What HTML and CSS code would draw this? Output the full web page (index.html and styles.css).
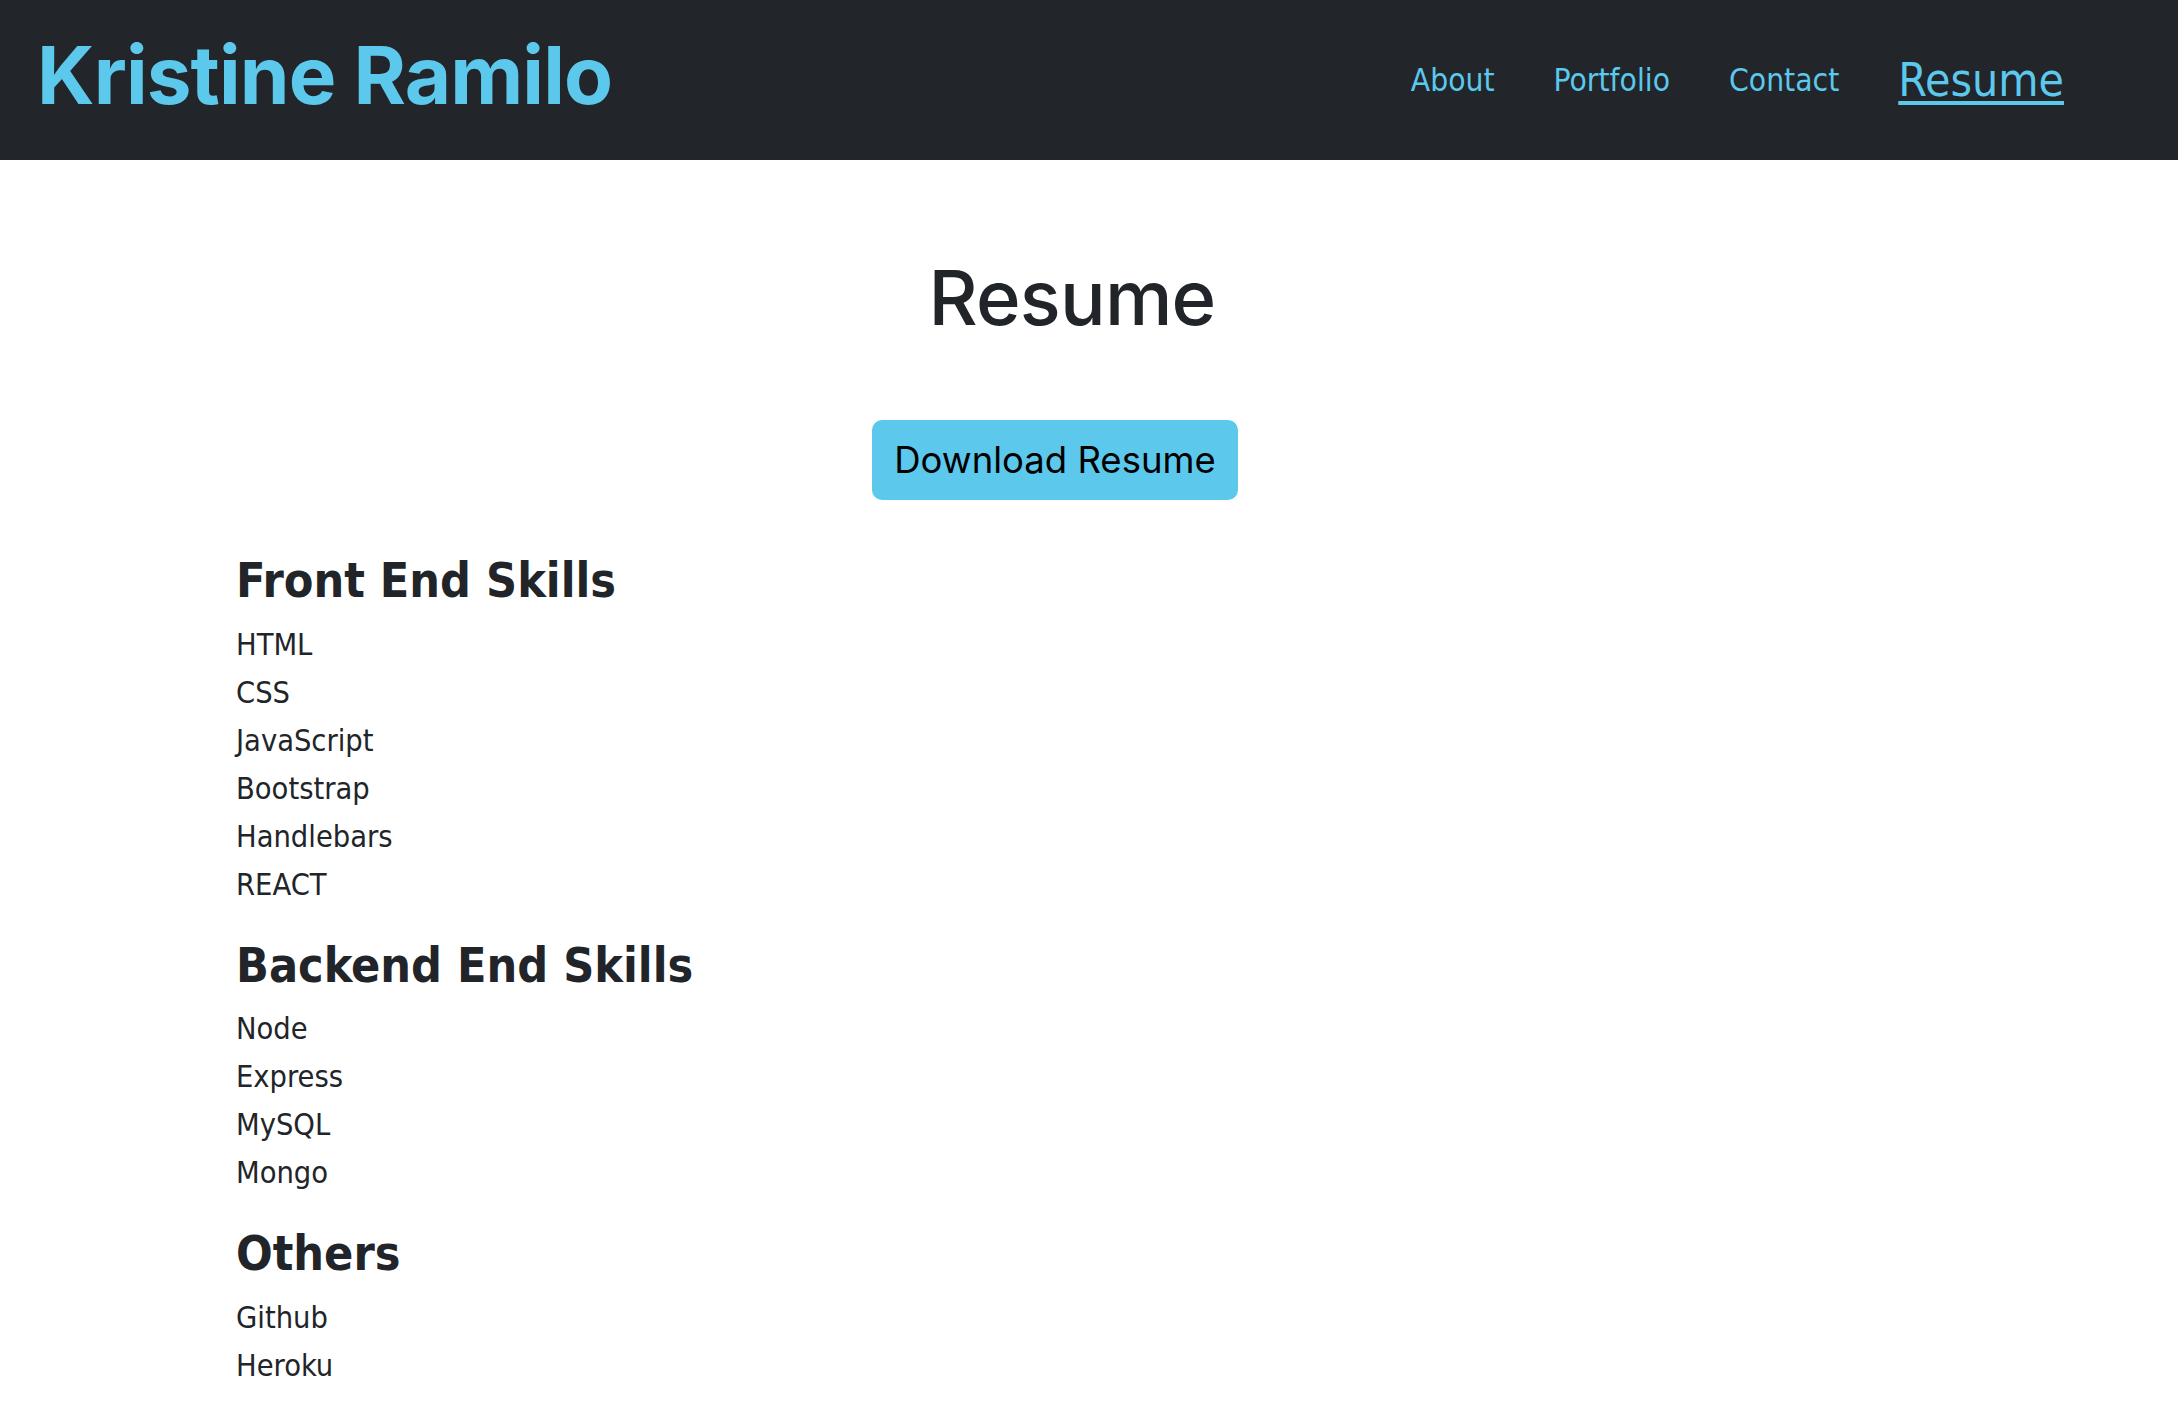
FILE: index.html
```html
<!DOCTYPE html>
<html lang="en">
<head>
<meta charset="utf-8">
<title>Kristine Ramilo - Resume</title>
<link rel="stylesheet" href="styles.css">
</head>
<body>
<header class="topbar">
  <h1 class="brand">Kristine Ramilo</h1>
  <nav class="nav">
    <a class="nav-link" href="#">About</a>
    <a class="nav-link" href="#">Portfolio</a>
    <a class="nav-link" href="#">Contact</a>
    <a class="nav-link active" href="#">Resume</a>
  </nav>
</header>
<main class="page">
  <h2 class="page-title">Resume</h2>
  <div class="download-row">
    <a class="download-btn" href="#">Download Resume</a>
  </div>
  <section class="skills">
    <h3 class="skills-title">Front End Skills</h3>
    <ul class="skills-list">
      <li>HTML</li>
      <li>CSS</li>
      <li>JavaScript</li>
      <li>Bootstrap</li>
      <li>Handlebars</li>
      <li>REACT</li>
    </ul>
    <h3 class="skills-title">Backend End Skills</h3>
    <ul class="skills-list">
      <li>Node</li>
      <li>Express</li>
      <li>MySQL</li>
      <li>Mongo</li>
    </ul>
    <h3 class="skills-title">Others</h3>
    <ul class="skills-list">
      <li>Github</li>
      <li>Heroku</li>
    </ul>
  </section>
</main>
</body>
</html>
```

FILE: styles.css
```css
* { box-sizing: border-box; }
html, body { margin: 0; padding: 0; background: #ffffff; color: #212529; }
body { font-family: Inter, "Liberation Sans", sans-serif; }

.topbar {
  height: 160px;
  background: #222529;
  display: flex;
  align-items: center;
  justify-content: space-between;
  padding: 0 114px 0 37px;
}
.brand {
  margin: -10px 0 0;
  font-family: Inter, sans-serif;
  font-weight: 700;
  font-size: 80px;
  letter-spacing: -0.9px;
  color: #5bc8ec;
  line-height: 1;
}
.nav {
  display: flex;
  align-items: center;
  gap: 59px;
  font-family: "DejaVu Sans Condensed", "DejaVu Sans", sans-serif;
  font-stretch: condensed;
}
.nav-link {
  color: #5bc8ec;
  text-decoration: none;
  font-size: 31.5px;
}
.nav-link.active {
  font-size: 46px;
  text-decoration: underline;
  text-decoration-thickness: 4px;
  text-underline-offset: 5px;
}

.page { padding: 0 0 10px 236px; }
.page-title {
  margin: 0;
  padding-top: 99px;
  padding-right: 270px;
  text-align: center;
  font-weight: 500;
  font-size: 76px;
  letter-spacing: -0.8px;
  line-height: 1;
}
.download-row {
  display: flex;
  justify-content: center;
  padding-right: 304px;
  margin-top: 85px;
}
.download-btn {
  display: inline-block;
  background: #5bc8ec;
  color: #000;
  text-decoration: none;
  font-size: 36.5px;
  line-height: 80px;
  padding: 0 22px;
  border-radius: 10px;
}
.skills {
  padding-top: 24px;
  font-family: "DejaVu Sans Condensed", "DejaVu Sans", sans-serif;
  font-stretch: condensed;
}
.skills-title {
  margin: 28px 0 11px;
  font-size: 48px;
  font-weight: 700;
  line-height: 1.2;
}
.skills-list {
  list-style: none;
  margin: 0;
  padding: 0;
  font-size: 30.5px;
  line-height: 48px;
}
```
